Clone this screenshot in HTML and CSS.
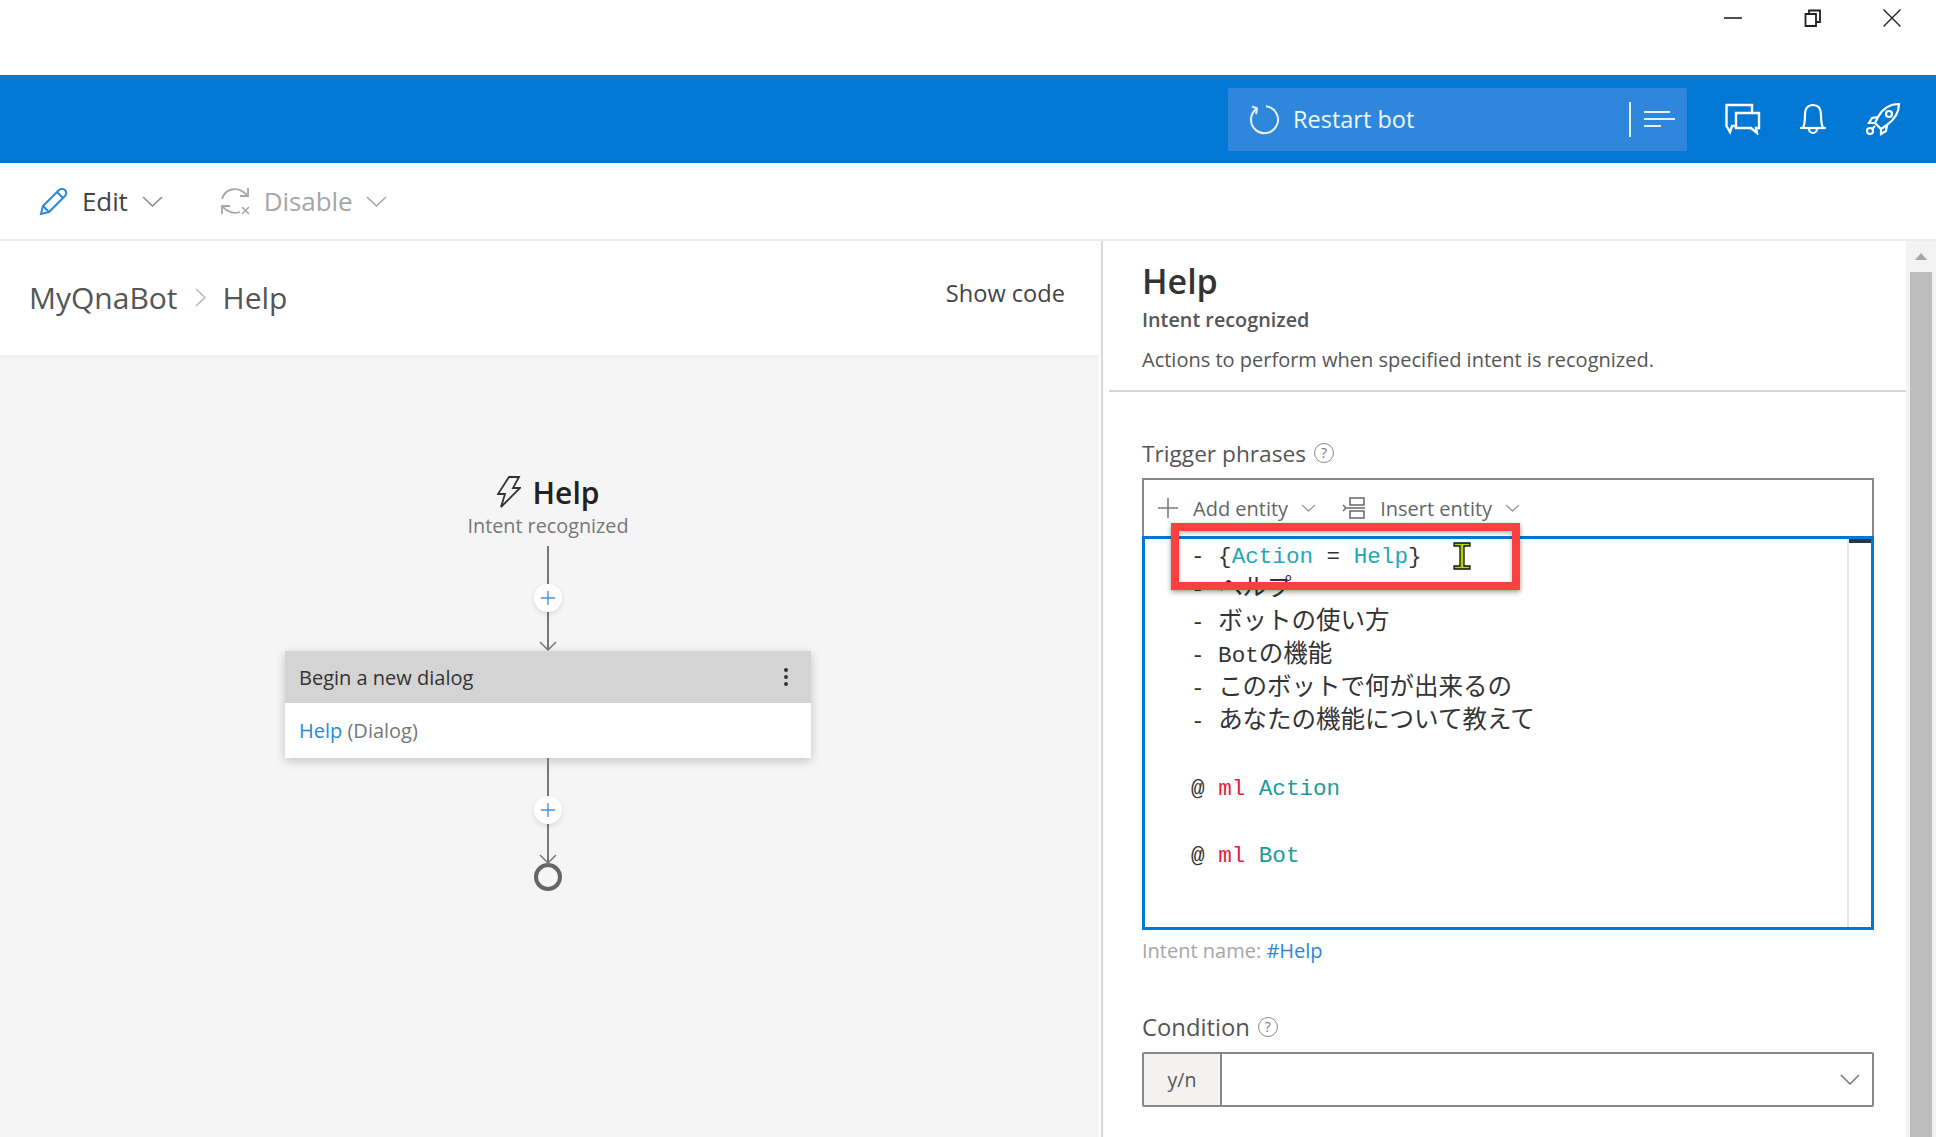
FILE: index.html
```html
<!DOCTYPE html>
<html>
<head>
	<meta charset="utf-8">
	<title>MyQnaBot - Help</title>
	<link rel="stylesheet" href="styles.css">
</head>
<body>
  <div class="winbar">
    <svg width="20" height="20" viewBox="0 0 20 20"><path d="M1 10H19" stroke="#222" stroke-width="1.6"/></svg>
    <svg width="20" height="20" viewBox="0 0 20 20"><path d="M2.5 6H13V18H2.5Z M6 6V2.5H17V14H13" fill="none" stroke="#222" stroke-width="1.8"/></svg>
    <svg width="20" height="20" viewBox="0 0 20 20"><path d="M1.5 1.5L18.5 18.5M18.5 1.5L1.5 18.5" stroke="#222" stroke-width="1.4"/></svg>
  </div>

  <div class="topbar">
    <div class="restart">
      <div class="restart-main">
        <svg width="32" height="32" viewBox="0 0 32 32" fill="none" stroke="#e6f1fb" stroke-width="2"><path d="M10 5.5A13.5 13.5 0 1 0 19 3.3"/><path d="M5 3.5L10 5.5L9 11"/></svg>
        <span>Restart bot</span>
      </div>
      <div class="restart-split">
        <svg width="32" height="18" viewBox="0 0 32 18" stroke="#e6f1fb" stroke-width="1.8"><path d="M1 2H27M1 9H32M1 16H18"/></svg>
      </div>
    </div>
    <div class="top-icons">
      <svg width="36" height="32" viewBox="0 0 36 32" fill="none" stroke="#fff" stroke-width="2.4"><path d="M11 23H7L5 29L1.5 23V2H27V9"/><path d="M11 10H34V25H31L32 30L26 25H11Z"/></svg>
      <svg width="28" height="32" viewBox="0 0 28 32" fill="none" stroke="#fff" stroke-width="2.2"><path d="M4 25C6 21 6 17 6 12C6 5 9 2 14 2C19 2 22 5 22 12C22 17 22 21 24 25Z"/><path d="M1 25H27"/><path d="M10 26A4 4 0 0 0 18 26"/></svg>
      <svg width="36" height="34" viewBox="0 0 36 34" fill="none" stroke="#fff" stroke-width="2.2"><path d="M34 2C25 2 18 6 13 15L10 21L16 27L22 23C30 17 34 11 34 2Z"/><circle cx="24" cy="12" r="3"/><path d="M13 15L7 16L4 21L10 21"/><path d="M22 23L21 29L16 32L16 27"/><circle cx="5" cy="29" r="3"/><path d="M10 24L7 27"/></svg>
    </div>
  </div>

  <div class="toolbar">
    <div class="tool">
      <svg width="29" height="29" viewBox="0 0 29 29" fill="none" stroke="#2b88d8" stroke-width="2"><path d="M2 27L4 19L20 3Q23 0.5 26 3Q28.5 6 26 9L10 25Z"/><path d="M4 19L10 25M18 5L24 11"/></svg>
      <span>Edit</span>
      <svg class="chev" width="21" height="11" viewBox="0 0 21 11" fill="none" stroke="#8a8a8a" stroke-width="1.5"><path d="M1 1L10.5 10L20 1"/></svg>
    </div>
    <div class="tool tool-off">
      <svg width="31" height="30" viewBox="0 0 31 30" fill="none" stroke="#a6a6a6" stroke-width="1.8"><path d="M2 13C5 3 17 -1 27 9"/><path d="M28 2V10H20"/><path d="M20 26C14 28 7 26 3 21"/><path d="M2 28V20H10"/><path d="M22 21L29 28M29 21L22 28" stroke-width="1.5"/></svg>
      <span>Disable</span>
      <svg class="chev" width="21" height="11" viewBox="0 0 21 11" fill="none" stroke="#a6a6a6" stroke-width="1.5"><path d="M1 1L10.5 10L20 1"/></svg>
    </div>
  </div>

  <div class="main">
    <div class="left">
      <div class="crumbs">
        <div class="crumb-path">
          <span>MyQnaBot</span>
          <svg width="11" height="19" viewBox="0 0 11 19" fill="none" stroke="#b5b5b5" stroke-width="1.5"><path d="M1 1L10 9.5L1 18"/></svg>
          <span>Help</span>
        </div>
        <div class="show-code">Show code</div>
      </div>
      <div class="canvas">
        <div class="node-title">
          <svg width="24" height="32" viewBox="0 0 24 32" fill="none" stroke="#333" stroke-width="1.8"><path d="M12 1H22L16 12H23L4 31L8 18H1Z"/></svg>
          <span>Help</span>
        </div>
        <div class="node-sub">Intent recognized</div>
        <div class="edge">
          <svg width="40" height="105" viewBox="0 0 40 105" fill="none" stroke="#777" stroke-width="2"><path d="M20 0V104"/><path d="M12 96L20 104L28 96" stroke-width="1.5"/></svg>
          <div class="plus"><svg width="14" height="14" viewBox="0 0 14 14" stroke="#4a90e2" stroke-width="1.4"><path d="M7 0V14M0 7H14"/></svg></div>
        </div>
        <div class="card">
          <div class="card-head">
            <span>Begin a new dialog</span>
            <svg width="6" height="20" viewBox="0 0 6 20" fill="#333"><circle cx="3" cy="3" r="2"/><circle cx="3" cy="10" r="2"/><circle cx="3" cy="17" r="2"/></svg>
          </div>
          <div class="card-body"><a class="link">Help</a> <span class="muted">(Dialog)</span></div>
        </div>
        <div class="edge">
          <svg width="40" height="105" viewBox="0 0 40 105" fill="none" stroke="#777" stroke-width="2"><path d="M20 0V105"/><path d="M12 97L20 105L28 97" stroke-width="1.5"/></svg>
          <div class="plus"><svg width="14" height="14" viewBox="0 0 14 14" stroke="#4a90e2" stroke-width="1.4"><path d="M7 0V14M0 7H14"/></svg></div>
        </div>
        <div class="end-dot"></div>
      </div>
    </div>

    <div class="right">
      <div class="panel">
        <div class="panel-head">
          <h1>Help</h1>
          <div class="panel-kind">Intent recognized</div>
          <div class="panel-desc">Actions to perform when specified intent is recognized.</div>
        </div>
        <div class="panel-form">
          <div class="label label-trigger">Trigger phrases <span class="qmark">?</span></div>
          <div class="editor-wrap">
            <div class="editor-tools">
              <svg width="20" height="20" viewBox="0 0 20 20" stroke="#777" stroke-width="1.5"><path d="M10 0V20M0 10H20"/></svg>
              <span class="et-text">Add entity</span>
              <svg class="et-chev" width="15" height="8" viewBox="0 0 15 8" fill="none" stroke="#999" stroke-width="1.3"><path d="M1 1L7.5 7L14 1"/></svg>
              <svg class="et-insert" width="23" height="22" viewBox="0 0 23 22" fill="none" stroke="#666" stroke-width="1.5"><path d="M8 1H22V8H8ZM8 14H22V21H8ZM5 11H23M1 8L4 11L1 14"/></svg>
              <span class="et-text">Insert entity</span>
              <svg class="et-chev" width="15" height="8" viewBox="0 0 15 8" fill="none" stroke="#999" stroke-width="1.3"><path d="M1 1L7.5 7L14 1"/></svg>
            </div>
            <div class="editor">
              <div class="code">
                <div class="ln">- {<span class="teal">Action</span> = <span class="teal">Help</span>}</div>
                <div class="ln">- <span class="jp">ヘルプ</span></div>
                <div class="ln">- <span class="jp">ボットの使い方</span></div>
                <div class="ln">- Bot<span class="jp">の機能</span></div>
                <div class="ln">- <span class="jp">このボットで何が出来るの</span></div>
                <div class="ln">- <span class="jp">あなたの機能について教えて</span></div>
                <div class="ln ln-gap">&nbsp;</div>
                <div class="ln">@ <span class="red">ml</span> <span class="teal2">Action</span></div>
                <div class="ln ln-gap">&nbsp;</div>
                <div class="ln">@ <span class="red">ml</span> <span class="teal2">Bot</span></div>
              </div>
              <div class="minimap"><div class="minimap-mark"></div></div>
            </div>
            <div class="callout"></div>
            <svg class="cursor" width="18" height="28" viewBox="0 0 18 28"><path d="M1 1H17V4H11V24H17V27H1V24H7V4H1Z" fill="#b5d400" stroke="#111" stroke-width="1.3"/></svg>
          </div>
          <div class="intent-name">Intent name: <a class="link">#Help</a></div>
          <div class="label label-cond">Condition <span class="qmark">?</span></div>
          <div class="cond">
            <div class="cond-prefix">y/n</div>
            <div class="cond-input">
              <svg width="20" height="11" viewBox="0 0 20 11" fill="none" stroke="#777" stroke-width="1.5"><path d="M1 1L10 10L19 1"/></svg>
            </div>
          </div>
        </div>
      </div>
      <div class="scrollbar">
        <div class="scroll-up"></div>
        <div class="scroll-thumb"></div>
      </div>
    </div>
  </div>
</body>
</html>
```

FILE: styles.css
```css
* {
	box-sizing: border-box;
}
html, body {
	height: 100%;
}
body {
	font-family: "Open Sans", "Noto Sans", sans-serif;
	margin: 0;
	padding: 0;
	background: #fff;
	color: #333;
	overflow: hidden;
	display: flex;
	flex-direction: column;
}

/* window controls */
.winbar {
	height: 75px;
	display: flex;
	justify-content: flex-end;
	align-items: flex-start;
	gap: 59.5px;
	padding: 8px 34px 0 0;
	flex: none;
}

/* blue bar */
.topbar {
	height: 88px;
	background: #0078d4;
	display: flex;
	align-items: center;
	justify-content: flex-end;
	padding-right: 35px;
	flex: none;
}
.restart {
	width: 459px;
	height: 63px;
	display: flex;
	background: #2e87da;
	border-radius: 2px;
	margin-right: 38px;
}
.restart-main {
	flex: 1;
	display: flex;
	align-items: center;
	gap: 14px;
	padding-left: 19px;
	color: #f0f6fc;
	font-size: 23.5px;
}
.restart-split {
	width: 58px;
	display: flex;
	align-items: center;
	padding-left: 14px;
	position: relative;
}
.restart-split::before {
	content: "";
	position: absolute;
	left: 0;
	top: 14px;
	bottom: 14px;
	width: 2px;
	background: #e6f1fb;
}
.top-icons {
	display: flex;
	align-items: center;
	gap: 38px;
}

/* command row */
.toolbar {
	height: 78px;
	border-bottom: 2px solid #ececec;
	display: flex;
	align-items: center;
	padding-left: 39px;
	gap: 57px;
	flex: none;
}
.tool {
	display: flex;
	align-items: center;
	font-size: 26px;
	color: #444;
	letter-spacing: -0.1px;
}
.tool span {
	margin-left: 14px;
}
.tool .chev {
	margin-left: 14px;
}
.tool-off {
	color: #a6a6a6;
}
.tool-off span {
	margin-left: 13px;
}

.main {
	flex: 1;
	display: flex;
	min-height: 0;
}

/* left side */
.left {
	width: 1103px;
	border-right: 2px solid #d8d8d8;
	display: flex;
	flex-direction: column;
	flex: none;
}
.crumbs {
	height: 114px;
	display: flex;
	justify-content: space-between;
	padding: 0 36px 0 29px;
	flex: none;
}
.crumb-path {
	display: flex;
	align-items: center;
	height: 113px;
	gap: 17px;
	font-size: 30px;
	color: #555;
}
.show-code {
	font-size: 23.6px;
	color: #444;
	margin-top: 36px;
}
.canvas {
	flex: 1;
	background: #f5f5f5;
	margin-right: 2px;
	padding: 118px 3px 0 0;
	display: flex;
	flex-direction: column;
	align-items: center;
	box-shadow: inset 0 6px 6px -6px rgba(0, 0, 0, 0.06);
}
.node-title {
	display: flex;
	align-items: center;
	gap: 12px;
	height: 38px;
	font-size: 30px;
	font-weight: 600;
	color: #222;
}
.node-sub {
	font-size: 19.8px;
	color: #777;
	height: 35px;
	line-height: 30px;
}
.edge {
	position: relative;
	width: 40px;
	height: 105px;
	display: flex;
	flex: none;
}
.plus {
	position: absolute;
	left: 6px;
	top: 38px;
	width: 28px;
	height: 28px;
	border-radius: 50%;
	background: #fff;
	box-shadow: 0 2px 5px rgba(0, 0, 0, 0.12);
	display: flex;
	align-items: center;
	justify-content: center;
}
.card {
	width: 526px;
	height: 107px;
	background: #fff;
	box-shadow: 0 3px 10px rgba(0, 0, 0, 0.2);
	flex: none;
}
.card-head {
	height: 52px;
	background: #d4d4d4;
	display: flex;
	align-items: center;
	justify-content: space-between;
	padding: 0 22px 0 14px;
	font-size: 20px;
	color: #333;
}
.card-body {
	height: 55px;
	line-height: 55px;
	padding-left: 14px;
	font-size: 20px;
}
.link {
	color: #2b88d8;
}
.muted {
	color: #777;
}
.end-dot {
	width: 28px;
	height: 28px;
	border: 4px solid #666;
	border-radius: 50%;
	flex: none;
}

/* right side */
.right {
	flex: 1;
	display: flex;
	min-width: 0;
}
.panel {
	flex: 1;
	padding-left: 6px;
	min-width: 0;
}
.panel-head {
	height: 151px;
	border-bottom: 2px solid #d4d4d4;
	padding: 15px 0 0 33px;
}
.panel-head h1 {
	margin: 0;
	font-size: 34px;
	line-height: 50px;
	font-weight: 600;
	color: #333;
}
.panel-kind {
	font-size: 19.8px;
	font-weight: 600;
	line-height: 28px;
	color: #555;
}
.panel-desc {
	font-size: 20px;
	line-height: 28px;
	margin-top: 12px;
	color: #555;
}
.panel-form {
	padding: 0 31px 0 33px;
}
.label {
	color: #555;
	display: flex;
	align-items: center;
	gap: 8px;
}
.label-trigger {
	margin-top: 46px;
	height: 30px;
	font-size: 22.7px;
}
.qmark {
	width: 20px;
	height: 20px;
	border: 1.5px solid #888;
	border-radius: 50%;
	font-size: 14px;
	line-height: 17px;
	text-align: center;
	color: #777;
}
.editor-wrap {
	position: relative;
	margin-top: 10px;
	width: 732px;
}
.editor-tools {
	height: 58px;
	border: 2px solid #888;
	border-bottom: none;
	display: flex;
	align-items: center;
	padding: 0 0 0 14px;
}
.et-text {
	font-size: 20px;
	color: #666;
	margin-left: 15px;
}
.et-chev {
	margin-left: 13px;
}
.et-insert {
	margin-left: 26px;
}
.editor {
	height: 394px;
	border: 3px solid #0078d4;
	display: flex;
}
.code {
	flex: 1;
	padding: 2px 0 0 46px;
	font-family: "Liberation Mono", "Noto Sans CJK JP", monospace;
	font-size: 22.6px;
	color: #333;
}
.ln {
	height: 33px;
	line-height: 33px;
	white-space: nowrap;
}
.ln-gap {
	height: 34px;
}
.jp {
	font-family: "Noto Sans CJK JP", sans-serif;
	font-size: 24.5px;
	line-height: 0;
}
.teal {
	color: #1fa8b8;
}
.teal2 {
	color: #179c9c;
}
.red {
	color: #e8203c;
}
.minimap {
	width: 24px;
	border-left: 2px solid #e6e6e6;
}
.minimap-mark {
	height: 4px;
	background: #333;
}
.callout {
	position: absolute;
	left: 29px;
	top: 45px;
	width: 349px;
	height: 67px;
	border: 8px solid #fb4040;
	box-shadow: 0 2px 5px rgba(0, 0, 0, 0.4), inset 0 2px 4px rgba(0, 0, 0, 0.3);
}
.cursor {
	position: absolute;
	left: 311px;
	top: 64px;
}
.intent-name {
	font-size: 20px;
	color: #a6a6a6;
	margin-top: 8px;
	height: 26px;
	line-height: 26px;
}
.label-cond {
	margin-top: 48px;
	height: 30px;
	font-size: 23.8px;
}
.cond {
	margin-top: 10px;
	width: 732px;
	height: 55px;
	border: 2px solid #888;
	border-radius: 2px;
	display: flex;
}
.cond-prefix {
	width: 78px;
	background: #f3f2f1;
	border-right: 2px solid #888;
	font-size: 19.5px;
	color: #555;
	display: flex;
	align-items: center;
	justify-content: center;
}
.cond-input {
	flex: 1;
	display: flex;
	align-items: center;
	justify-content: flex-end;
	padding-right: 12px;
}

/* scrollbar */
.scrollbar {
	width: 30px;
	background: #f3f3f3;
	padding: 0 4px;
	flex: none;
}
.scroll-up {
	height: 31px;
	position: relative;
}
.scroll-up::after {
	content: "";
	position: absolute;
	left: 5px;
	top: 12px;
	border-left: 6px solid transparent;
	border-right: 6px solid transparent;
	border-bottom: 7px solid #a8a8a8;
}
.scroll-thumb {
	height: 900px;
	background: #bdbdbd;
}
```
